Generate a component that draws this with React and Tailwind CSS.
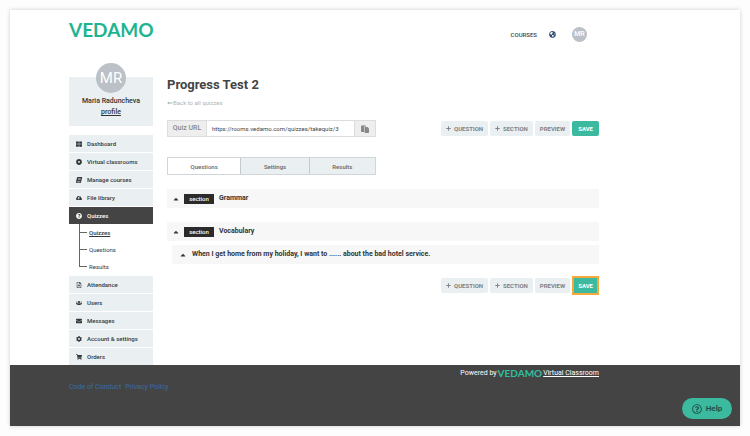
import { useState } from "react";
import {
  FaThLarge,
  FaDotCircle,
  FaBook,
  FaCloudUploadAlt,
  FaQuestionCircle,
  FaRegFileAlt,
  FaUsers,
  FaEnvelope,
  FaCog,
  FaShoppingCart,
  FaGlobeAmericas,
  FaPlus,
  FaCaretUp,
  FaLongArrowAltLeft,
  FaRegQuestionCircle,
} from "react-icons/fa";
import { FaPaste } from "react-icons/fa6";

const topItems = [
  { label: "Dashboard", icon: FaThLarge },
  { label: "Virtual classrooms", icon: FaDotCircle },
  { label: "Manage courses", icon: SlantedBook },
  { label: "File library", icon: FaCloudUploadAlt },
  { label: "Quizzes", icon: FaQuestionCircle, active: true },
];

const quizItems = ["Quizzes", "Questions", "Results"];

const bottomItems = [
  { label: "Attendance", icon: FaRegFileAlt },
  { label: "Users", icon: FaUsers },
  { label: "Messages", icon: FaEnvelope },
  { label: "Account & settings", icon: FaCog },
  { label: "Orders", icon: FaShoppingCart },
];

const tabs = ["Questions", "Settings", "Results"];

function SlantedBook() {
  return <FaBook className="size-[6px] -skew-x-12" />;
}

function MenuItem({ item }) {
  const Icon = item.icon;
  return (
    <a
      href="#"
      className={
        item.active
          ? "flex h-[17px] items-center gap-[5px] bg-[#444] pl-[7px] text-white"
          : "flex h-[17px] items-center gap-[5px] bg-[#eaeff1] pl-[7px]"
      }
    >
      <Icon className="size-[6px]" />
      {item.label}
    </a>
  );
}

function Sidebar() {
  return (
    <aside className="w-[84px] shrink-0">
      <div className="relative mx-auto flex size-[30px] items-center justify-center rounded-full bg-[#bbc1c6] text-[15px] text-white">
        MR
      </div>
      <div className="-mt-4 mb-[9px] bg-[#eaeff1] pt-[19px] pb-[8px] text-center text-[7px] leading-[11px] font-medium">
        <p>Maria Raduncheva</p>
        <a href="#" className="block underline">profile</a>
      </div>

      <nav className="text-[6px] font-medium text-[#33383c]">
        <div className="flex flex-col gap-px">
          {topItems.map((item) => (
            <MenuItem key={item.label} item={item} />
          ))}
        </div>

        {/* Quizzes submenu */}
        <ul className="mb-[1px] ml-[10px] font-normal">
          {quizItems.map((label, index) => (
            <li key={label} className="flex h-[17px] items-center gap-[2px]">
              <span className="flex h-full w-2 flex-col">
                <span className="h-1/2 border-b border-l border-[#666]" />
                <span className={index < 2 ? "h-1/2 border-l border-[#666]" : "h-1/2"} />
              </span>
              <a href="#" className={index === 0 ? "font-medium underline" : ""}>
                {label}
              </a>
            </li>
          ))}
        </ul>

        <div className="flex flex-col gap-px">
          {bottomItems.map((item) => (
            <MenuItem key={item.label} item={item} />
          ))}
        </div>
      </nav>
    </aside>
  );
}

function Actions({ highlight }) {
  const grey =
    "flex h-[15px] items-center gap-[3px] rounded-[2px] bg-[#eaeff1] px-[5px] text-[#7d8387]";
  return (
    <div className="flex shrink-0 items-center gap-[2px] text-[6px] font-bold">
      <button className={grey}>
        <FaPlus className="size-[5px]" /> QUESTION
      </button>
      <button className={grey}>
        <FaPlus className="size-[5px]" /> SECTION
      </button>
      <button className={grey}>PREVIEW</button>
      <button
        className={
          highlight
            ? "h-[19px] border-2 border-[#f7a83c] bg-[#3bbaa0] px-[4px] text-white"
            : "h-[15px] rounded-[2px] bg-[#3bbaa0] px-[6px] text-white"
        }
      >
        SAVE
      </button>
    </div>
  );
}

function SectionRow({ title }) {
  return (
    <div className="flex h-[19px] items-center bg-[#f7f7f7] pl-[5px]">
      <button aria-label="Collapse">
        <FaCaretUp className="size-[8px]" />
      </button>
      <span className="mx-[4px] flex h-[10px] w-[30px] items-center justify-center bg-[#2b2b2b] text-[6px] font-medium text-white">
        section
      </span>
      <h2 className="pl-px text-[7px] font-bold">{title}</h2>
    </div>
  );
}

export default function App() {
  const [tab, setTab] = useState("Questions");

  return (
    <div className="min-h-screen bg-[#fdfdfd] p-[10px] font-[Roboto,sans-serif] text-[#333]">
      <div className="bg-white shadow-[0_0_4px_rgba(0,0,0,0.2)]">
        <div className="pr-[141px] pl-[59px]">
          <header className="mb-[5px] flex h-12 items-center justify-between">
            <a href="#" className="mb-2 font-[Lato,sans-serif] text-[19px] leading-6 font-bold text-[#1fb490]">
              VEDAMO
            </a>
            <nav className="mr-3 flex items-center text-[6px] font-medium text-[#34495e]">
              <a href="#">COURSES</a>
              <button aria-label="Language" className="mr-[16px] ml-[12px]">
                <FaGlobeAmericas className="size-[7px] text-[#2c4a72]" />
              </button>
              <button className="size-[15px] rounded-full bg-[#bbc1c6] text-[7px] text-white">MR</button>
            </nav>
          </header>

          <div className="flex gap-[14px]">
            <Sidebar />

            <main className="min-w-0 flex-1 pt-[14px]">
              <h1 className="text-[13px] leading-4 font-bold text-[#444]">Progress Test 2</h1>
              <a href="#" className="mt-1 flex items-center text-[6px] leading-3 text-[#aeb4b8]">
                <FaLongArrowAltLeft className="size-[6px]" />
                Back to all quizzes
              </a>

              <div className="mt-[11px] flex items-center justify-between">
                <div className="flex h-[17px] w-[209px] border border-[#ddd] bg-[#eee]">
                  <label htmlFor="quiz-url" className="flex w-[38px] shrink-0 items-center justify-center text-[7px] font-medium text-[#888]">
                    Quiz URL
                  </label>
                  <input
                    id="quiz-url"
                    readOnly
                    defaultValue="https://rooms.vedamo.com/quizzes/takequiz/3"
                    className="min-w-0 flex-1 border-x border-[#ddd] bg-white px-[5px] text-[6px] text-[#444]"
                  />
                  <button aria-label="Copy" className="flex w-5 items-center justify-center text-[#888]">
                    <FaPaste className="size-[8px]" />
                  </button>
                </div>
                <Actions />
              </div>

              {/* Tabs */}
              <div role="tablist" className="mt-5 flex h-[18px] w-[209px] border border-[#cfd5d8] text-[6px] font-medium text-[#666]">
                {tabs.map((name) => (
                  <button
                    key={name}
                    role="tab"
                    aria-selected={tab === name}
                    onClick={() => setTab(name)}
                    className={
                      tab === name
                        ? "grow bg-white px-5"
                        : "grow border-l border-[#c4cbcf] bg-[#eaeff1] px-5"
                    }
                  >
                    {name}
                  </button>
                ))}
              </div>

              <section className="mt-[14px]">
                <SectionRow title="Grammar" />
                <div className="mt-[14px]">
                  <SectionRow title="Vocabulary" />
                </div>
                <div className="mt-1 ml-[5px] flex h-[19px] items-center bg-[#f7f7f7] pl-[7px]">
                  <button aria-label="Collapse" className="mr-[5px]">
                    <FaCaretUp className="size-[8px]" />
                  </button>
                  <p className="text-[7px] font-bold">
                    When I get home from my holiday, I want to ...... about the bad hotel service.
                  </p>
                </div>
              </section>

              <div className="mt-3 flex justify-end">
                <Actions highlight />
              </div>
            </main>
          </div>
        </div>

        <footer className="bg-[#444] pt-[2px] pr-[141px] pb-[33px] pl-[59px] text-[7px] leading-3">
          <p className="flex items-center justify-end gap-px text-white">
            Powered by
            <span className="font-[Lato,sans-serif] text-[10px] font-bold text-[#2fbf9c]">VEDAMO</span>
            <a href="#" className="underline">Virtual Classroom</a>
          </p>
          <div className="mt-[2px] flex gap-[4px] text-[#3b6ba5]">
            <a href="#">Code of Conduct</a>
            <a href="#">Privacy Policy</a>
          </div>
        </footer>
      </div>

      <button className="fixed right-[18px] bottom-[17px] flex h-[21px] w-[50px] items-center justify-center gap-[4px] rounded-full bg-[#3bbaa0] text-[8px] font-bold text-[#22524a]">
        <FaRegQuestionCircle className="size-[10px]" />
        Help
      </button>
    </div>
  );
}
